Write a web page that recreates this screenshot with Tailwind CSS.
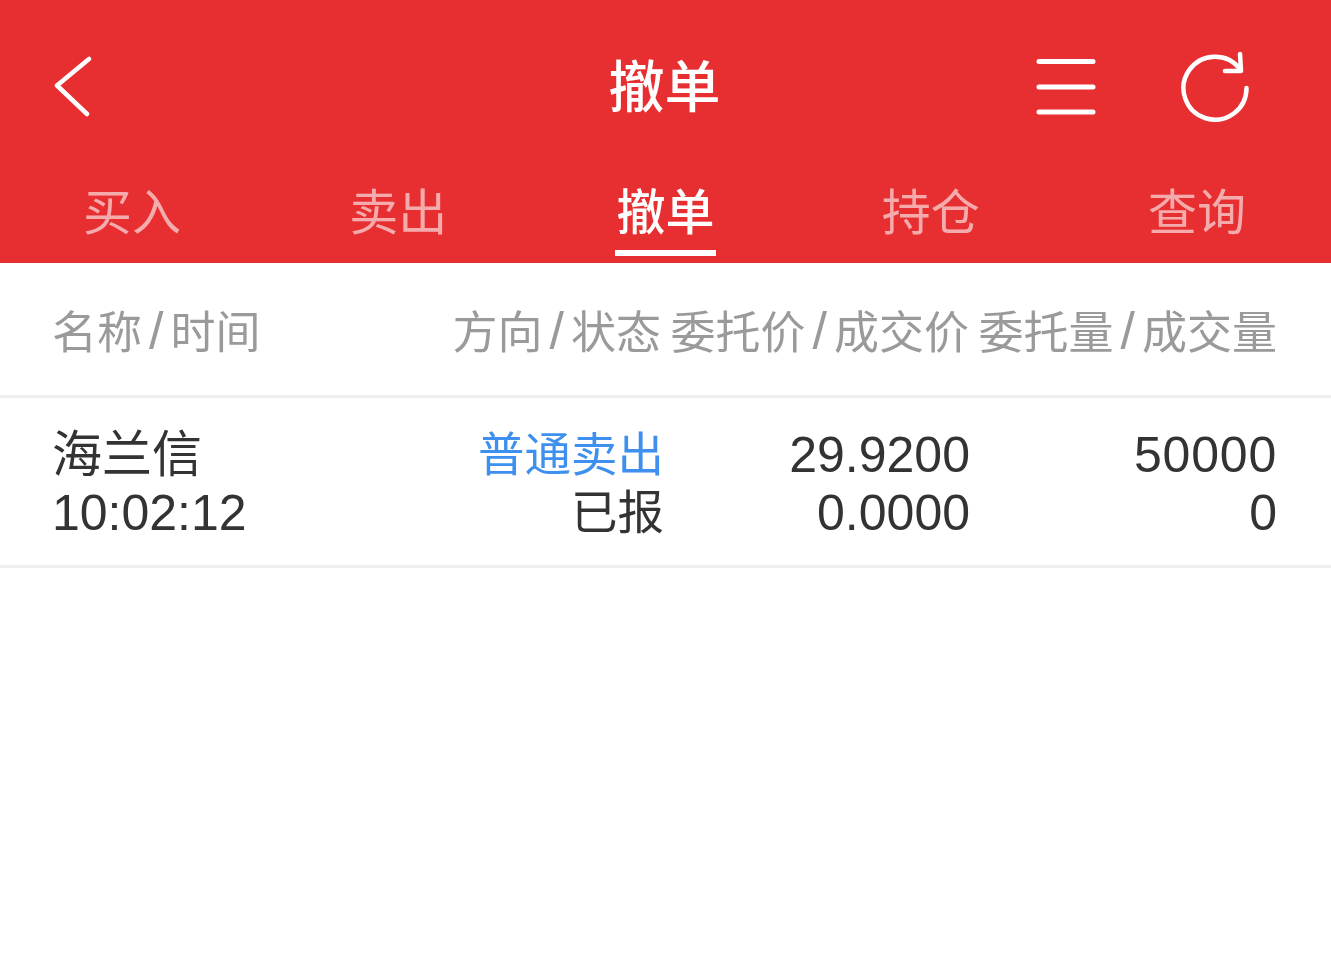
<!doctype html>
<html lang="zh-CN">
<head>
<meta charset="utf-8">
<script src="https://cdn.jsdelivr.net/npm/@tailwindcss/browser@4"></script>
</head>
<body class="bg-white">
<div class="w-[1331px] h-[957px] overflow-hidden bg-white blur-[0.5px] font-['Liberation_Sans','Noto_Sans_CJK_SC',sans-serif]">
  <header class="h-[263px] bg-[#e72e30] flex flex-col">
    <div class="h-[172px] grid grid-cols-[1fr_auto_1fr] items-center pl-[54px] pr-[54px]">
      <svg class="w-[38px] h-[62px] mt-[1px]" viewBox="0 0 38 62" fill="none" stroke="#fff" stroke-width="4.5" stroke-linecap="round" stroke-linejoin="round"><path d="M35 3 L3 29.5 L33 58"/></svg>
      <h1 class="text-[56px] leading-none font-medium text-white mt-[4px] -ml-[1px] mr-[1px]">撤单</h1>
      <div class="flex justify-end items-center gap-[84px] pr-[27px]">
        <svg class="w-[60px] h-[60px] mt-[2px]" viewBox="0 0 60 60" fill="none" stroke="#fff" stroke-width="5" stroke-linecap="round"><path d="M3 4.5H57M3 30H57M3 55H57"/></svg>
        <svg class="w-[70px] h-[72px]" viewBox="0 0 70 72" fill="none" stroke="#fff" stroke-width="4.5" stroke-linecap="round" stroke-linejoin="round"><path d="M66.5 38A31.5 31.5 0 1 1 60 19"/><path d="M60 4L61 21L45 21"/></svg>
      </div>
    </div>
    <nav class="grid grid-cols-5 text-[49px] leading-none text-white/60 text-center">
      <a class="h-[91px] flex justify-center"><span class="h-[83px] pt-[17px] -translate-x-[1px]">买入</span></a>
      <a class="h-[91px] flex justify-center"><span class="h-[83px] pt-[17px] -translate-x-[1px]">卖出</span></a>
      <a class="h-[91px] flex justify-center"><span class="h-[84px] pt-[17px] px-[1px] text-white font-medium border-b-[6px] border-white">撤单</span></a>
      <a class="h-[91px] flex justify-center"><span class="h-[83px] pt-[17px] -translate-x-[1px]">持仓</span></a>
      <a class="h-[91px] flex justify-center"><span class="h-[83px] pt-[17px] -translate-x-[1px]">查询</span></a>
    </nav>
  </header>
  <div class="h-[135px] grid grid-cols-[1fr_306px_307px] items-center pl-[52px] pr-[54px] pt-[3px] border-b-[3px] border-[#eeeeee] text-[45px] leading-none text-[#9a9a9a]">
    <div class="flex justify-between"><span>名称<span class="mx-[7px] text-[52px] leading-none">/</span>时间</span><span class="pr-[3px]">方向<span class="mx-[7px] text-[52px] leading-none">/</span>状态</span></div>
    <div class="text-right whitespace-nowrap pr-[1px]">委托价<span class="mx-[7px] text-[52px] leading-none">/</span>成交价</div>
    <div class="text-right whitespace-nowrap">委托量<span class="mx-[7px] text-[52px] leading-none">/</span>成交量</div>
  </div>
  <div class="h-[170px] grid grid-cols-[1fr_306px_307px] content-center pl-[52px] pr-[54px] pt-[4px] border-b-[3px] border-[#eeeeee] text-[50px] leading-[58px] text-[#333333]">
    <div class="flex justify-between">
      <div><div>海兰信</div><div>10:02:12</div></div>
      <div class="text-right text-[46.5px]"><div class="text-[#3e8fee]">普通卖出</div><div>已报</div></div>
    </div>
    <div class="text-right"><div>29.9200</div><div>0.0000</div></div>
    <div class="text-right"><div class="tracking-[0.8px]">50000</div><div>0</div></div>
  </div>
</div>
</body>
</html>
